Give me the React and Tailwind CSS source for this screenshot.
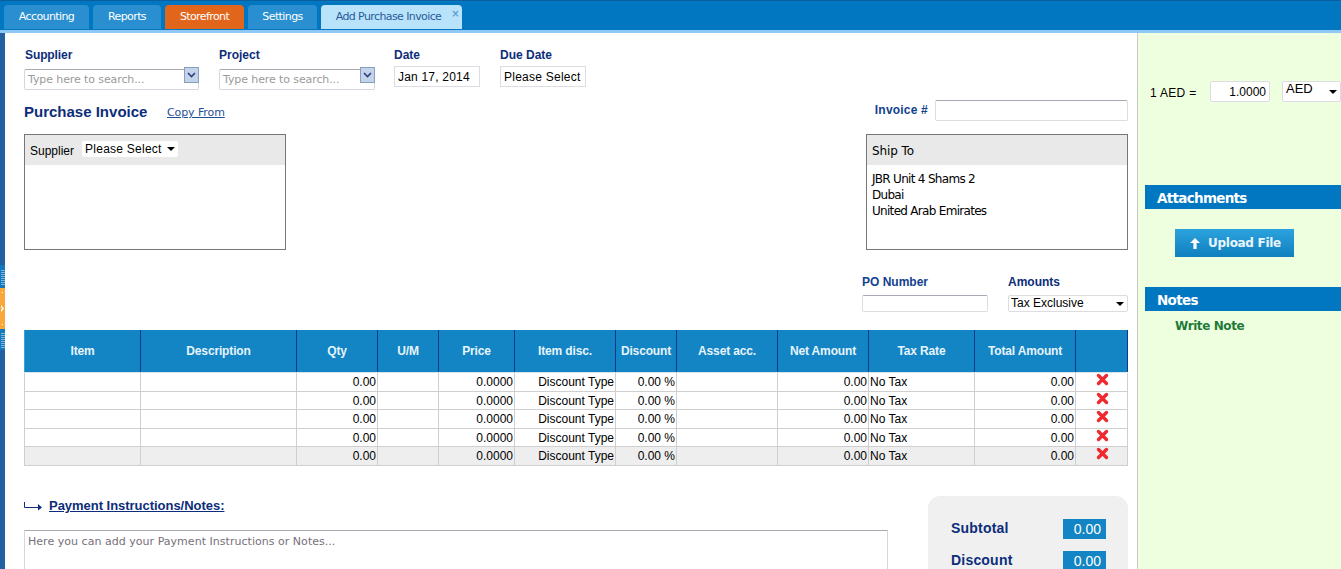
import React from "react";

const arial = "font-['Liberation_Sans',Arial,sans-serif]";
const taho = "font-['DejaVu_Sans',Verdana,sans-serif]";

function Caret({ className = "" }) {
  return <span className={`inline-block w-0 h-0 border-x-[4px] border-x-transparent border-t-[4px] border-t-black ${className}`} />;
}

function Label({ children, className = "" }) {
  return <div className={`text-[12px] leading-[14px] font-bold text-[#0c2d7a] ${className}`}>{children}</div>;
}

function SearchBox({ w }) {
  return (
    <div className={`relative ${w} h-[21px] border border-[#d6d6de] border-t-[#a9a9b3] rounded-[2px] bg-white`}>
      <span className={`block pl-[3px] pt-[3px] text-[11px] leading-[14px] text-[#9a9a9a] ${taho} tracking-[-0.1px]`}>Type here to search...</span>
      <span className="absolute -right-[1px] -top-[3px] w-[15px] h-[16px] flex items-center justify-center bg-[#c3d3ea] border border-[#8a9dc0]">
        <svg width="9" height="6" viewBox="0 0 9 6"><path d="M1 1l3.5 3.5L8 1" fill="none" stroke="#2a3f78" strokeWidth="1.6" /></svg>
      </span>
    </div>
  );
}

const cols = ["w-[117px]", "w-[156px]", "w-[81px]", "w-[61px]", "w-[76px]", "w-[101px]", "w-[61px]", "w-[101px]", "w-[91px]", "w-[106px]", "w-[101px]", "w-[52px]"];
const heads = ["Item", "Description", "Qty", "U/M", "Price", "Item disc.", "Discount", "Asset acc.", "Net Amount", "Tax Rate", "Total Amount", ""];
const cells = [
  ["", ""],
  ["", ""],
  ["0.00", "r"],
  ["", ""],
  ["0.0000", "r"],
  ["Discount Type", "r"],
  ["0.00 %", "r"],
  ["", ""],
  ["0.00", "r"],
  ["No Tax", "l"],
  ["0.00", "r"],
  ["x", "c"],
];

function Row({ gray, h }) {
  return (
    <div className={`flex ${h} border-b border-[#cfcfcf] ${gray ? "bg-[#eeeeee]" : "bg-white"}`}>
      {cells.map(([t, a], i) => (
        <div
          key={i}
          className={`${cols[i]} shrink-0 border-r border-[#cfcfcf] ${i === 0 ? "border-l" : ""} flex items-center text-[12px] text-black ${
            a === "r" ? "justify-end pr-[1px]" : a === "l" ? "pl-[1px]" : "justify-center"
          }`}
        >
          {a === "c" ? (
            <svg width="13" height="13" viewBox="0 0 13 13" className="-mt-[5px] ml-[1px]">
              <path d="M2.5 2.5l8 8M10.5 2.5l-8 8" stroke="#ee2a2f" strokeWidth="3.4" strokeLinecap="round" />
            </svg>
          ) : (
            t
          )}
        </div>
      ))}
    </div>
  );
}

function Box({ head, children }) {
  return (
    <div className="w-[262px] h-[116px] border border-[#777777] bg-white">
      <div className="h-[30px] bg-[#e9e9e9] flex items-center pl-[5px] text-[12px] text-black">{head}</div>
      <div className={`pl-[5px] pt-[6px] text-[12px] leading-[16px] text-black ${taho} tracking-[-0.7px]`}>{children}</div>
    </div>
  );
}

function Tab({ w, bg, color = "text-white", children, extra }) {
  return (
    <div className={`${w} ${bg} ${color} relative h-[24px] rounded-t-[4px] flex items-center justify-center text-[11px] ${taho} tracking-[-0.6px]`}>
      {children}
      {extra}
    </div>
  );
}

function SideBar({ children }) {
  return <div className={`ml-[7px] h-[24px] bg-[#0077c0] pl-[12px] pt-[2px] flex items-center text-white font-bold text-[13.5px] ${taho} tracking-[-0.7px]`}>{children}</div>;
}

function Total({ label, cls }) {
  return (
    <div className={`flex items-center justify-between ${cls}`}>
      <span className="text-[14px] font-bold text-[#0c2d7a] tracking-[0.2px] ml-[1px]">{label}</span>
      <span className="w-[43px] h-[20px] bg-[#1384c4] text-white text-[14px] leading-[20px] text-right pr-[5px]">0.00</span>
    </div>
  );
}

function Grip() {
  return <div className="w-[4px] h-[16px] bg-[repeating-linear-gradient(0deg,#7fb6dc_0,#7fb6dc_1px,transparent_1px,transparent_2px)]" />;
}

export default function App() {
  return (
    <div className={`h-[569px] w-[1341px] overflow-hidden flex flex-col bg-white ${arial}`}>
      {/* Top bar */}
      <div className="h-[30px] shrink-0 bg-[#0077c0] border-t border-[#0b5f9e] pt-[4px] pl-[4px] flex gap-[4px]">
        <Tab w="w-[85px]" bg="bg-[#2a8fd0]">Accounting</Tab>
        <Tab w="w-[68px]" bg="bg-[#2a8fd0]">Reports</Tab>
        <Tab w="w-[79px]" bg="bg-[#e2651c]">Storefront</Tab>
        <Tab w="w-[69px]" bg="bg-[#2a8fd0]">Settings</Tab>
        <Tab
          w="w-[141px]"
          bg="bg-[#b9e3fb]"
          color="text-[#2a5a9a]"
          extra={<span className="absolute right-[3px] top-[3px] text-[10px] leading-[12px] font-bold text-[#5a9fd0]">×</span>}
        >
          <span className="pr-[6px]">Add Purchase Invoice</span>
        </Tab>
      </div>
      <div className="h-[3px] shrink-0 bg-[#8fc8f5]" />

      <div className="flex flex-1 min-h-0">
        {/* Left strip */}
        <div className="w-[5px] shrink-0 bg-[#22609f] flex flex-col">
          <div className="h-[232px] shrink-0" />
          <div className="h-[23px] shrink-0 bg-[#1478bd] flex flex-col justify-center items-center"><Grip /></div>
          <div className="h-[41px] shrink-0 bg-[#f9a63a]">
            <svg width="5" height="41" viewBox="0 0 5 41" className="block">
              <rect x="2" y="4" width="1" height="1" fill="#fff" />
              <path d="M1 17l3 3.5-3 3.5v-2l1-1.5-1-1.5z" fill="#fff" />
              <rect x="2" y="36" width="1" height="1" fill="#fff" />
            </svg>
          </div>
          <div className="h-[21px] shrink-0 bg-[#1478bd] flex flex-col justify-center items-center"><Grip /></div>
        </div>

        {/* Main */}
        <div className="w-[1132px] shrink-0 pl-[19px] pr-[9px] pt-[15px]">
          <div className="flex">
            <div className="w-[195px]">
              <Label className="ml-[1px] tracking-[-0.1px]">Supplier</Label>
              <div className="mt-[7px]"><SearchBox w="w-[175px]" /></div>
            </div>
            <div className="w-[175px]">
              <Label>Project</Label>
              <div className="mt-[7px]"><SearchBox w="w-[156px]" /></div>
            </div>
            <div className="w-[106px]">
              <Label>Date</Label>
              <div className="mt-[4px] w-[86px] h-[21px] border border-[#dcdce2] flex items-center pl-[3px] text-[12px] tracking-[0.2px] text-black">Jan 17, 2014</div>
            </div>
            <div>
              <Label>Due Date</Label>
              <div className="mt-[4px] w-[86px] h-[21px] border border-[#dcdce2] flex items-center pl-[3px] text-[12px] tracking-[0.25px] text-black">Please Select</div>
            </div>
          </div>

          <div className="flex items-center mt-[9px] h-[22px]">
            <span className="text-[15px] font-bold text-[#0c2d7a] w-[143px] mt-[5px]">Purchase Invoice</span>
            <span className={`text-[11px] underline text-[#1f4f96] mt-[7px] ${taho} tracking-[-0.1px]`}>Copy From</span>
            <span className="ml-auto text-[12px] font-bold text-[#12418f] mr-[7px] tracking-[0.2px]">Invoice #</span>
            <div className="w-[193px] h-[21px] border border-[#dcdce2] border-t-[#a9a9b3] rounded-[2px]" />
          </div>

          <div className="flex justify-between mt-[13px]">
            <Box
              head={
                <>
                  <span className="mt-[1px]">Supplier</span>
                  <span className="ml-[8px] -mt-[2px] w-[96px] h-[16px] bg-white rounded-[2px] flex items-center pl-[3px] gap-[5px] tracking-[0.25px]">
                    Please Select <Caret />
                  </span>
                </>
              }
            />
            <Box head={<span className={`${taho} tracking-[-0.1px] mt-[1px]`}>Ship To</span>}>
              <div>JBR Unit 4 Shams 2</div>
              <div>Dubai</div>
              <div>United Arab Emirates</div>
            </Box>
          </div>

          <div className="flex justify-end mt-[25px]">
            <div className="w-[146px]">
              <Label className="text-[#12418f]">PO Number</Label>
              <div className="mt-[6px] w-[126px] h-[17px] border border-[#dcdce2] border-t-[#a9a9b3] rounded-[2px]" />
            </div>
            <div className="w-[120px]">
              <Label>Amounts</Label>
              <div className="mt-[6px] h-[17px] pb-[2px] border border-[#dcdce2] rounded-[2px] flex items-center justify-between pl-[2px] pr-[3px] text-[12px] text-black">
                Tax Exclusive <Caret className="mt-[3px]" />
              </div>
            </div>
          </div>

          {/* Table */}
          <div className="mt-[18px] w-[1104px]">
            <div className="flex h-[43px] w-[1103px] bg-[#1384c4] border-b border-[#d5e5f0]">
              {heads.map((h, i) => (
                <div
                  key={i}
                  className={`${cols[i]} shrink-0 border-r border-[#0b3c8c] ${i === 0 ? "border-l border-l-[#2fa6dc]" : ""} flex items-center justify-center text-[12px] font-bold tracking-[-0.15px] text-[#e6f4fc]`}
                >
                  {h}
                </div>
              ))}
            </div>
            <Row h="h-[19px]" />
            <Row h="h-[18px]" />
            <Row h="h-[19px]" />
            <Row h="h-[18px]" />
            <Row gray h="h-[19px]" />
          </div>

          {/* Bottom */}
          <div className="flex mt-[30px]">
            <div className="w-[864px] mr-[40px]">
              <div className="flex items-center mt-[2px] h-[16px]">
                <svg width="19" height="9" viewBox="0 0 19 9" className="mr-[6px]">
                  <path d="M0.5 0v5.5H15" fill="none" stroke="#0c2d7a" strokeWidth="1" />
                  <path d="M14 2l4 3.5-4 3z" fill="#0c2d7a" />
                </svg>
                <span className="text-[13px] font-bold underline text-[#0c2d7a] tracking-[-0.03px]">Payment Instructions/Notes:</span>
              </div>
              <div className={`mt-[16px] h-[80px] border border-[#d6d6de] border-t-[#a9a9b3] pl-[3px] pt-[3px] text-[11px] text-[#77707a] ${taho} tracking-[0.03px]`}>
                Here you can add your Payment Instructions or Notes...
              </div>
            </div>
            <div className="w-[200px] h-[120px] shrink-0 bg-[#f0f0f0] rounded-[12px] pt-[22px] pl-[22px] pr-[22px]">
              <Total label="Subtotal" />
              <Total label="Discount" cls="mt-[11px]" />
            </div>
          </div>
        </div>

        {/* Right panel */}
        <div className="flex-1 bg-[#eeffdf] border-l border-[#c9c9c9] min-w-0">
          <div className="h-[48px]" />
          <div className="flex items-center h-[21px] ml-[12px]">
            <span className="text-[12px] text-black w-[60px] mt-[3px] tracking-[0.3px]">1 AED =</span>
            <div className="w-[60px] h-[21px] bg-white border border-[#dcdce2] rounded-[2px] flex items-center justify-end pr-[3px] text-[12px] text-black">1.0000</div>
            <div className="ml-[12px] flex-1 h-[21px] bg-white border border-[#dcdce2] rounded-[2px] flex items-center justify-between pl-[3px] pr-[3px] text-[13px] text-black">
              <span className="-mt-[6px]">AED</span>
              <Caret />
            </div>
          </div>
          <div className="mt-[83px]"><SideBar>Attachments</SideBar></div>
          <button className={`ml-[37px] mt-[20px] w-[119px] h-[28px] pl-[2px] bg-gradient-to-b from-[#2ba3de] to-[#0f7fbe] flex items-center justify-center gap-[8px] text-[12px] font-bold text-[#eaf6fd] ${taho} tracking-[-0.3px]`}>
            <svg width="10" height="11" viewBox="0 0 10 11"><path d="M5 0l5 5H6.6v6H3.4V5H0z" fill="#fff" /></svg>
            Upload File
          </button>
          <div className="mt-[30px]"><SideBar>Notes</SideBar></div>
          <div className={`ml-[37px] mt-[8px] text-[12px] leading-[15px] font-bold text-[#1f7a3a] ${taho} tracking-[-0.4px]`}>Write Note</div>
        </div>
      </div>
    </div>
  );
}
